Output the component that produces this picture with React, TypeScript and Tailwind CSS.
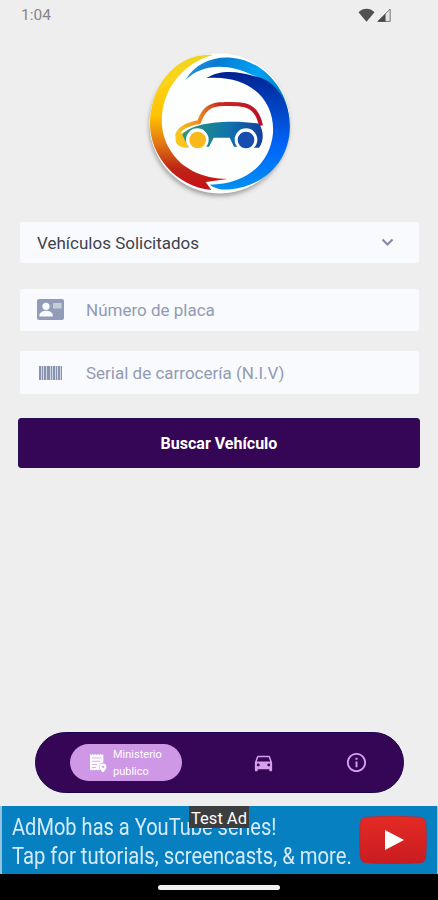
import type { ReactNode } from 'react';
import { MdDirectionsCar, MdInfoOutline } from 'react-icons/md';

function StatusBar() {
  return (
    <div className="h-[30px] shrink-0 flex items-center justify-between pl-[21px] pr-[47px]">
      <span className="pt-px text-[15.5px] leading-none text-[#858585]">1:04</span>
      <div className="flex items-center gap-[2px]">
        <svg width="17" height="15" viewBox="0 0 17 15">
          <path d="M.5 4.2C5-.3 12-.3 16.5 4.2L8.5 13.8Z" fill="#515151" />
        </svg>
        <svg width="14" height="15" viewBox="0 0 14 15">
          <path d="M.8 13.4 13.2 1v12.4Z" fill="#e4e4e4" stroke="#777" strokeWidth="1" />
          <path d="M.5 13.7 8.5 5.7v8Z" fill="#484848" />
        </svg>
      </div>
    </div>
  );
}

function Logo() {
  return (
    <svg width="160" height="160" viewBox="0 0 480 480">
      <defs>
        <linearGradient id="warm" x1="0" y1="30" x2="0" y2="435" gradientUnits="userSpaceOnUse">
          <stop offset="0" stopColor="#eed51c" />
          <stop offset=".2" stopColor="#fcd31a" />
          <stop offset=".45" stopColor="#ffc400" />
          <stop offset=".67" stopColor="#e07414" />
          <stop offset=".85" stopColor="#be2414" />
          <stop offset="1" stopColor="#c5101c" />
        </linearGradient>
        <linearGradient id="sky" x1="150" y1="60" x2="440" y2="170" gradientUnits="userSpaceOnUse">
          <stop offset="0" stopColor="#2a93d8" />
          <stop offset=".25" stopColor="#087ad2" />
          <stop offset=".65" stopColor="#00a2f4" />
          <stop offset="1" stopColor="#0079bc" />
        </linearGradient>
        <linearGradient id="deep" x1="330" y1="90" x2="350" y2="430" gradientUnits="userSpaceOnUse">
          <stop offset="0" stopColor="#002494" />
          <stop offset=".35" stopColor="#0048c8" />
          <stop offset=".65" stopColor="#0064fa" />
          <stop offset="1" stopColor="#008ff2" />
        </linearGradient>
        <linearGradient id="roof" x1="115" y1="0" x2="365" y2="0" gradientUnits="userSpaceOnUse">
          <stop offset="0" stopColor="#f8c61c" />
          <stop offset=".25" stopColor="#ec8e20" />
          <stop offset=".5" stopColor="#c72c20" />
          <stop offset="1" stopColor="#bd1025" />
        </linearGradient>
        <linearGradient id="body" x1="110" y1="0" x2="370" y2="0" gradientUnits="userSpaceOnUse">
          <stop offset="0" stopColor="#2d9d80" />
          <stop offset=".3" stopColor="#1d888f" />
          <stop offset=".6" stopColor="#1174ad" />
          <stop offset="1" stopColor="#143f9c" />
        </linearGradient>
        <filter id="shade" x="-10%" y="-10%" width="120%" height="125%">
          <feDropShadow dx="-2" dy="9" stdDeviation="6" floodColor="#555" floodOpacity=".5" />
        </filter>
      </defs>
      <circle cx="242" cy="238" r="210" fill="#fdfefe" filter="url(#shade)" />
      <path d="M222 33C112 25 33 127 33 239c0 95 76 187 184 199l-17-24 66-9C190 405 123 372 92 315 36 222 82 72 222 33Z" fill="url(#warm)" />
      <path d="M139 109C168 58 222 36 278 41c94 8 166 94 172 180-17-74-55-108-108-127-68-33-148-40-203 15Z" fill="url(#sky)" />
      <path d="M202 102C240 78 292 79 347 97c53 8 95 60 104 124 14 112-62 203-175 215-25 3-46-2-64-14 108 0 182-62 190-155C408 167 331 91 202 102Z" fill="url(#deep)" />
      <path d="M114 278c2-20 19-35 66-44 14-40 34-54 75-54 55-2 79 3 96 27 9 13 12 25 15 38" fill="none" stroke="url(#roof)" strokeWidth="12" />
      <path d="M110 280c8-10 20-16 32-16l15 47h-16c-22 0-34-12-31-31Z" fill="#fac51d" />
      <path d="M130 272c16-23 60-34 122-38 45-2 78 1 108 5 14 20 16 52 0 72h-11l-64-3-13-27h-48l-14 27h-63Z" fill="url(#body)" />
      <circle cx="175" cy="287" r="34" fill="#fdfefe" />
      <circle cx="321" cy="287" r="34" fill="#fdfefe" />
      <path d="M105 312h265v12H105Z" fill="#fdfefe" />
      <circle cx="176" cy="288" r="25" fill="#f8b91d" />
      <circle cx="321" cy="288" r="25" fill="#174db0" />
    </svg>
  );
}

function PlateIcon() {
  return (
    <svg width="27" height="21" viewBox="0 0 27 21" className="mb-px">
      <rect width="27" height="21" rx="2" fill="#929cb9" />
      <circle cx="9" cy="7.3" r="3.6" fill="#f8fafe" />
      <path d="M2.4 17.5v-1.4c0-3 4.4-4.4 6.7-4.4s6.7 1.4 6.7 4.4v1.4Z" fill="#f8fafe" />
      <rect x="16" y="4" width="8.5" height="5.5" fill="#c5ced8" />
    </svg>
  );
}

function BarcodeIcon() {
  return (
    <svg width="23" height="14" viewBox="0 0 23 14" fill="#8993ad">
      <rect width="23" height="14" fill="#cfd5e3" />
      <rect x="0" width="2" height="14" />
      <rect x="3" width="1" height="14" />
      <rect x="5" width="2" height="14" />
      <rect x="8" width="3" height="14" />
      <rect x="12" width="1" height="14" />
      <rect x="14" width="2" height="14" />
      <rect x="17" width="1" height="14" />
      <rect x="19" width="2" height="14" />
      <rect x="22" width="1" height="14" />
    </svg>
  );
}

function ReportIcon() {
  return (
    <svg width="18" height="20" viewBox="0 0 18 20" className="shrink-0">
      <path d="M1 1 2.3 2 3.6 1 5 2 6.3 1 7.6 2 9 1l1.3 1 1.3-1L13 2l1.3-1v8.5c-2.4.2-4.2 2-4.2 4.3 0 1.1.5 2.3 1.2 3.5L10 16.5l-1.3 1-1.4-1-1.3 1-1.3-1-1.4 1-1.3-1-1 1Z" fill="#fff" />
      <path d="M3 5h9.5M3 8.3h8M3 11.5h5M3 14.5h4" stroke="#cf98e7" strokeWidth=".8" />
      <path d="M14 10.6a3.4 3.4 0 0 0-3.4 3.4c0 2.4 3.4 5.5 3.4 5.5s3.4-3.1 3.4-5.5a3.4 3.4 0 0 0-3.4-3.4Z" fill="#fff" />
      <circle cx="14" cy="13.8" r="1.1" fill="#cf98e7" />
    </svg>
  );
}

function Field({ icon, label, className }: { icon: ReactNode; label: string; className: string }) {
  return (
    <div className={`ml-5 mr-[19px] flex items-center rounded-[2px] bg-[#f8fafe] pl-[15px] text-[#929bb3] ${className}`}>
      <div className="w-[31px] flex justify-center">{icon}</div>
      <span className="ml-5 pt-px text-[17px] leading-none">{label}</span>
    </div>
  );
}

function AdBanner() {
  return (
    <div className="relative h-[68px] shrink-0 flex items-center justify-between overflow-hidden border-l-2 border-r border-[#94c3df] bg-[#0780c2] pl-[10px] pr-[10px]">
      <div className="w-[338px] pt-[3px] whitespace-nowrap text-[23px] leading-[29px] text-[#d4eafa]">
        <p className="w-max origin-left scale-x-[0.872]">AdMob has a YouTube series!</p>
        <p className="w-max origin-left scale-x-[0.88]">Tap for tutorials, screencasts, &amp; more.</p>
      </div>
      <svg width="68" height="48" viewBox="0 0 68 48" className="shrink-0">
        <defs>
          <linearGradient id="play" x1="0" y1="0" x2="0" y2="1">
            <stop offset="0" stopColor="#e42b25" />
            <stop offset="1" stopColor="#c91c20" />
          </linearGradient>
        </defs>
        <path d="M8 1Q34-1 60 1c5 0 7 3 7 8q1 15 0 30c0 5-2 8-7 8q-26 2-52 0c-5 0-7-3-7-8Q0 24 1 9c0-5 2-8 7-8Z" fill="url(#play)" stroke="#a52b38" strokeWidth=".5" />
        <path d="m26 14 19 10-19 10Z" fill="#fff" />
      </svg>
      <span className="absolute left-[187px] top-0 h-[22px] w-[60px] bg-[#3b3d3e] text-center text-[16.5px] leading-[25px] whitespace-nowrap text-white">Test Ad</span>
    </div>
  );
}

export default function App() {
  return (
    <div className="h-[900px] w-[438px] flex flex-col overflow-hidden bg-[#eee] font-['Roboto','Liberation_Sans',sans-serif]">
      <StatusBar />
      <div className="mt-[14px] flex justify-center"><Logo /></div>

      <div className="mt-[18px] ml-5 mr-[19px] h-[41px] flex items-center justify-between rounded-[2px] bg-[#f8fafe] pl-[17px] pr-[25px]">
        <span className="pt-[2px] text-[17px] leading-none text-[#40424b]">Vehículos Solicitados</span>
        <svg width="13" height="9" viewBox="0 0 13 9">
          <path d="m1.5 1.5 5 5 5-5" fill="none" stroke="#8b86a8" strokeWidth="2" />
        </svg>
      </div>
      <Field icon={<PlateIcon />} label="Número de placa" className="mt-[26px] h-[42px]" />
      <Field icon={<BarcodeIcon />} label="Serial de carrocería (N.I.V)" className="mt-5 h-[43px]" />

      <button className="mx-[18px] mt-6 h-[50px] shrink-0 rounded-[3px] border border-[#251056] bg-[#350655] pt-[2px] text-base font-bold text-white">Buscar Vehículo</button>

      <nav className="ml-[35px] mr-[34px] mt-auto mb-[13px] h-[61px] shrink-0 flex items-center rounded-full border border-[#1b0650] bg-[#350655] pl-[34px] text-[#d6a0ec]">
        <div className="h-[37px] w-[112px] flex items-center gap-[6px] rounded-full bg-[#cf98e7] pl-[19px] text-white">
          <ReportIcon />
          <span className="pt-px text-[11px] leading-[17px]">Ministerio<br />publico</span>
        </div>
        <MdDirectionsCar className="ml-[70px] h-[23px] w-[23px]" />
        <MdInfoOutline className="ml-[70px] h-[23px] w-[23px]" />
      </nav>

      <AdBanner />
      <div className="h-[26px] shrink-0 flex justify-center bg-black pt-[11px]">
        <div className="h-[5px] w-[122px] rounded-full bg-[#f1f1f1]" />
      </div>
    </div>
  );
}
